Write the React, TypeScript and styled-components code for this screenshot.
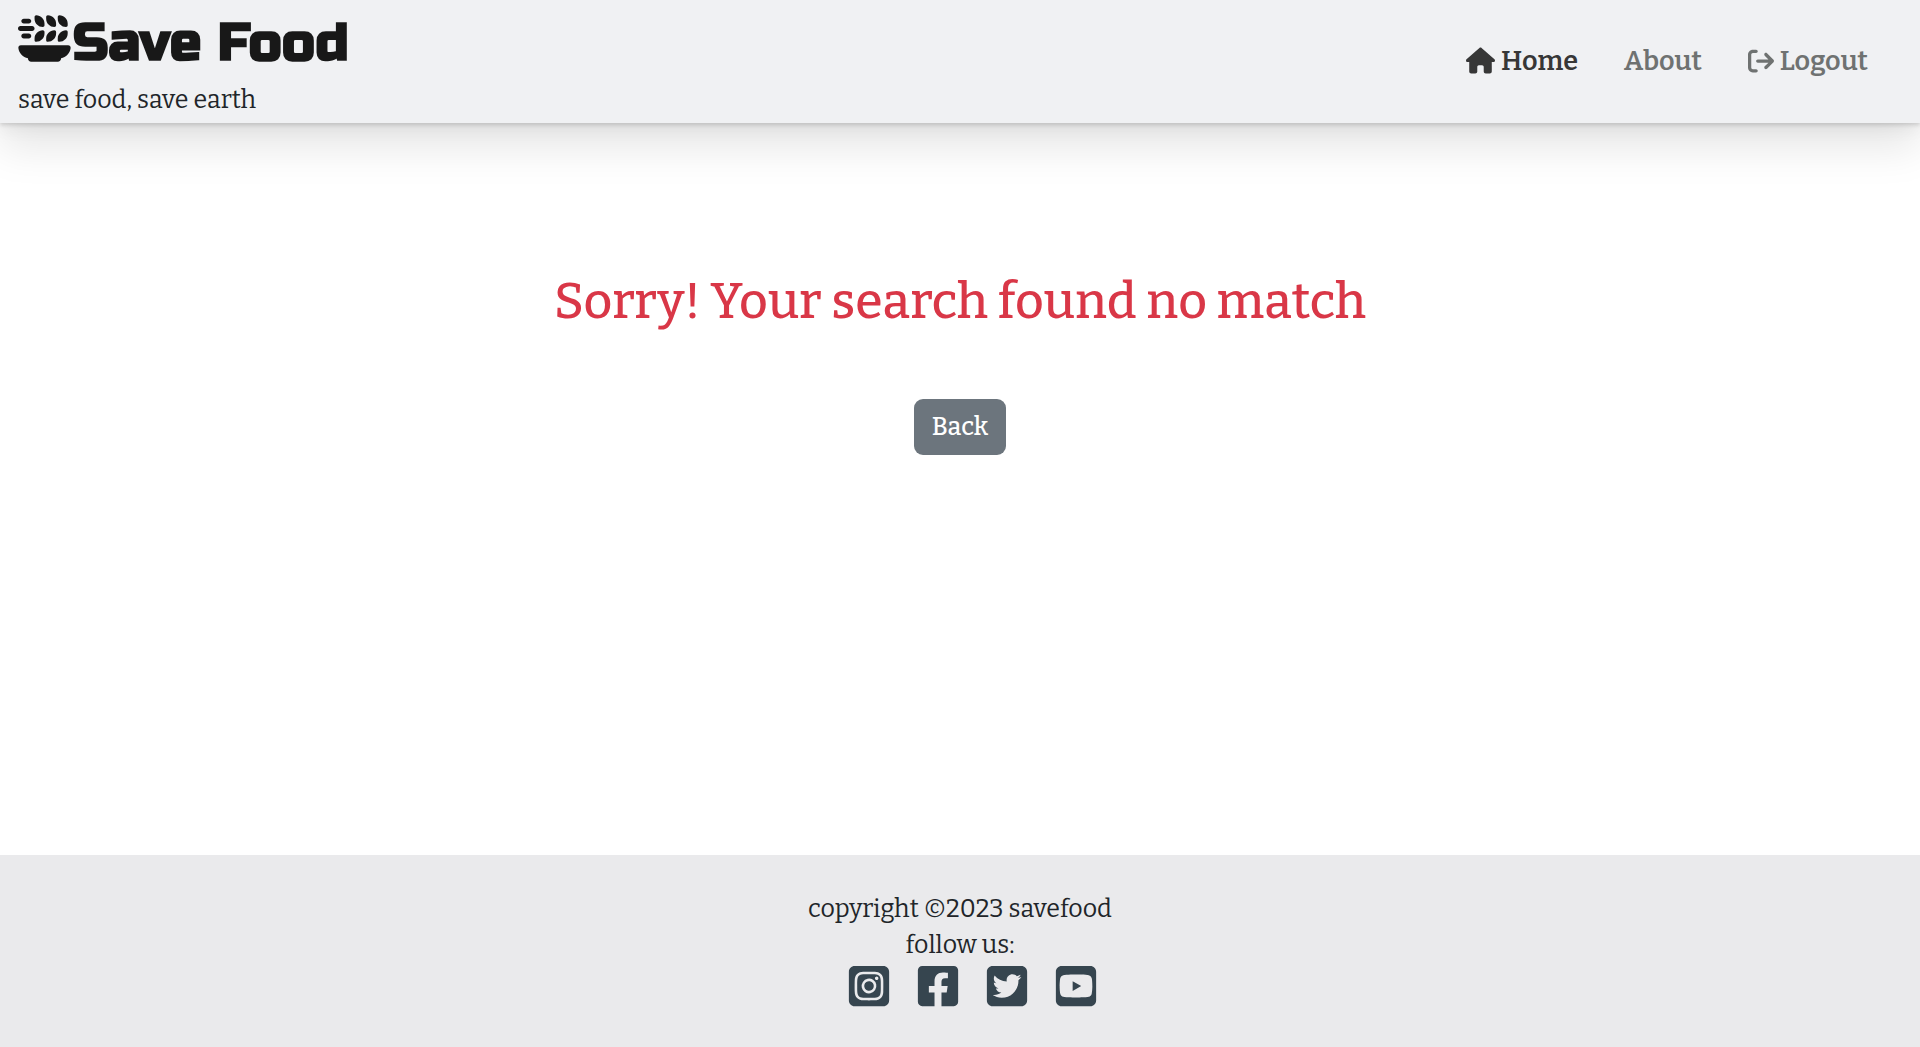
import React from "react";
import styled, { createGlobalStyle } from "styled-components";
import {
  FaPlateWheat,
  FaHouse,
  FaArrowRightFromBracket,
  FaSquareInstagram,
  FaSquareTwitter,
  FaSquareYoutube,
} from "react-icons/fa6";
import { FaFacebookSquare } from "react-icons/fa";

const GlobalStyle = createGlobalStyle`
  *, *::before, *::after {
    box-sizing: border-box;
  }

  body {
    margin: 0;
    background: #ffffff;
    color: #212529;
    font-family: Bitter, "DejaVu Serif Condensed", "DejaVu Serif", serif;
    font-size: 25px;
    line-height: 36px;
  }
`;

const Page = styled.div`
  display: flex;
  flex-direction: column;
  min-height: 100vh;
`;

const Header = styled.header`
  display: flex;
  align-items: center;
  justify-content: space-between;
  padding: 7px 52px 5px 18px;
  background: #f0f1f3;
  box-shadow:
    0 2px 4px rgba(0, 0, 0, 0.14),
    0 6px 16px rgba(0, 0, 0, 0.05),
    0 24px 40px rgba(0, 0, 0, 0.1);
`;

const Brand = styled.a`
  display: flex;
  flex-direction: column;
  gap: 3px;
  color: #212529;
  text-decoration: none;
`;

const Logo = styled.span`
  color: #181818;
  font-family: "Russo One", Inter, sans-serif;
  font-size: 53px;
  font-weight: 900;
  line-height: 72px;

  svg {
    margin-right: 2px;
    vertical-align: -5px;
  }
`;

const Nav = styled.nav`
  display: flex;
  gap: 46px;
  padding-bottom: 4px;
`;

const NavLink = styled.a<{ $active?: boolean }>`
  display: flex;
  align-items: center;
  gap: 6px;
  color: ${({ $active }) => ($active ? "#373737" : "#6f7271")};
  font-size: 27px;
  font-weight: 600;
  text-decoration: none;
`;

const Main = styled.main`
  display: flex;
  flex: 1;
  flex-direction: column;
  align-items: center;
  gap: 68px;
  padding: 148px 24px 48px;
`;

const Message = styled.h1`
  margin: 0;
  color: #d93747;
  font-size: 50px;
  font-weight: 500;
  line-height: 60px;
  text-align: center;
`;

const BackButton = styled.button`
  padding: 10px 18px;
  border: 0;
  border-radius: 9px;
  background: #6c757d;
  color: #ffffff;
  font: inherit;
  font-weight: 500;
  cursor: pointer;
`;

const Footer = styled.footer`
  display: flex;
  flex-direction: column;
  align-items: center;
  padding: 36px 24px 38px;
  background: #eaeaec;
  text-align: center;
`;

const FooterText = styled.p`
  margin: 0;
`;

const SocialLinks = styled.div`
  display: flex;
  gap: 23px;
  padding-left: 24px;
`;

const SocialLink = styled.a`
  display: flex;
  color: #36454f;
`;

const socials = [
  { name: "Instagram", Icon: FaSquareInstagram },
  { name: "Facebook", Icon: FaFacebookSquare },
  { name: "Twitter", Icon: FaSquareTwitter },
  { name: "YouTube", Icon: FaSquareYoutube },
];

export default function App() {
  return (
    <Page>
      <GlobalStyle />
      <Header>
        <Brand href="#">
          <Logo>
            <FaPlateWheat />
            Save Food
          </Logo>
          <span>save food, save earth</span>
        </Brand>
        <Nav>
          <NavLink href="#" $active>
            <FaHouse size={29} />
            Home
          </NavLink>
          <NavLink href="#">About</NavLink>
          <NavLink href="#">
            <FaArrowRightFromBracket size={26} />
            Logout
          </NavLink>
        </Nav>
      </Header>
      <Main>
        <Message>Sorry! Your search found no match</Message>
        <BackButton type="button">Back</BackButton>
      </Main>
      <Footer>
        <FooterText>copyright ©2023 savefood</FooterText>
        <FooterText>follow us:</FooterText>
        <SocialLinks>
          {socials.map(({ name, Icon }) => (
            <SocialLink key={name} href="#" aria-label={name}>
              <Icon size={46} />
            </SocialLink>
          ))}
        </SocialLinks>
      </Footer>
    </Page>
  );
}
